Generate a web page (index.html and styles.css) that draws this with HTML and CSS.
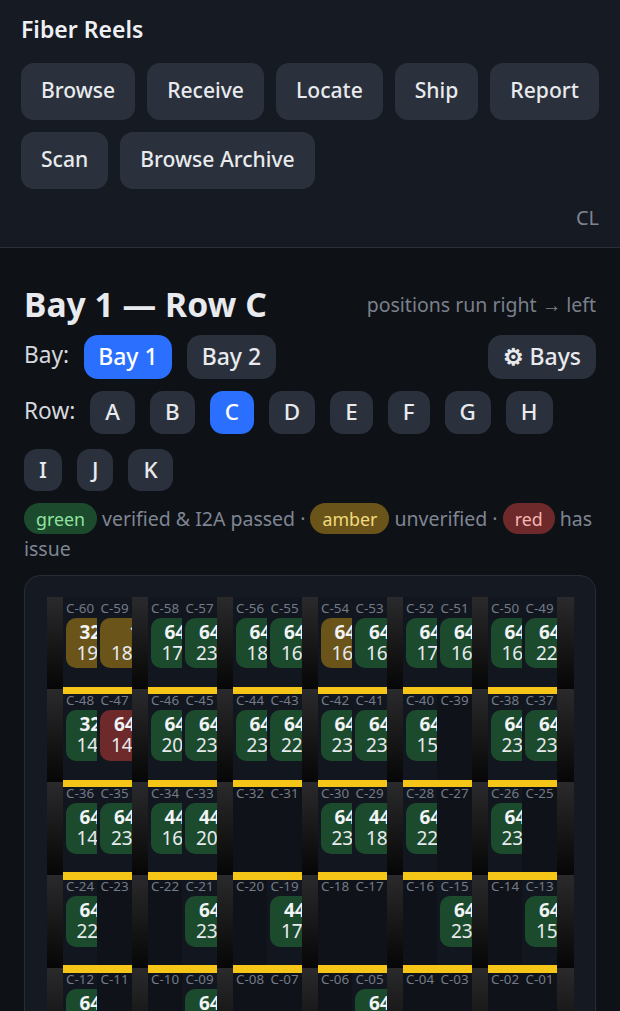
FILE: index.html
```html
<!DOCTYPE html>
<html lang="en">
<head>
<meta charset="utf-8">
<title>Fiber Reels</title>
<link rel="stylesheet" href="styles.css">
</head>
<body>
<header class="top">
  <div class="brand">Fiber Reels</div>
  <nav class="nav">
    <a class="nav-btn">Browse</a><a class="nav-btn">Receive</a><a class="nav-btn">Locate</a><a class="nav-btn">Ship</a><a class="nav-btn">Report</a><a class="nav-btn">Scan</a><a class="nav-btn">Browse Archive</a>
  </nav>
  <div class="user">CL</div>
</header>
<main class="main">
  <div class="title-row"><h1>Bay 1 — Row C</h1><span class="hint">positions run right → left</span></div>
  <div class="bay-row"><span class="lbl">Bay:</span><a class="pill on">Bay 1</a><a class="pill">Bay 2</a><a class="pill gear"><span class="cog">⚙</span> Bays</a></div>
  <div class="row-row"><span class="lbl">Row:</span><a class="key">A</a><a class="key">B</a><a class="key on">C</a><a class="key">D</a><a class="key">E</a><a class="key">F</a><a class="key">G</a><a class="key">H</a><a class="key">I</a><a class="key">J</a><a class="key">K</a></div>
  <p class="legend"><span class="tag g">green</span> verified &amp; I2A passed · <span class="tag a">amber</span> unverified · <span class="tag r">red</span> has issue</p>
  <section class="rack">
    <div class="cell"><div class="bay"><div class="slot"><div class="pos">C-60</div><div class="card a"><b>32</b><span>19</span></div></div><div class="slot"><div class="pos">C-59</div><div class="card a"><b class="far">1</b><span>18</span></div></div><div class="beam"></div></div></div>
    <div class="cell"><div class="bay"><div class="slot"><div class="pos">C-58</div><div class="card g"><b>64</b><span>17</span></div></div><div class="slot"><div class="pos">C-57</div><div class="card g"><b>64</b><span>23</span></div></div><div class="beam"></div></div></div>
    <div class="cell"><div class="bay"><div class="slot"><div class="pos">C-56</div><div class="card g"><b>64</b><span>18</span></div></div><div class="slot"><div class="pos">C-55</div><div class="card g"><b>64</b><span>16</span></div></div><div class="beam"></div></div></div>
    <div class="cell"><div class="bay"><div class="slot"><div class="pos">C-54</div><div class="card a"><b>64</b><span>16</span></div></div><div class="slot"><div class="pos">C-53</div><div class="card g"><b>64</b><span>16</span></div></div><div class="beam"></div></div></div>
    <div class="cell"><div class="bay"><div class="slot"><div class="pos">C-52</div><div class="card g"><b>64</b><span>17</span></div></div><div class="slot"><div class="pos">C-51</div><div class="card g"><b>64</b><span>16</span></div></div><div class="beam"></div></div></div>
    <div class="cell"><div class="bay"><div class="slot"><div class="pos">C-50</div><div class="card g"><b>64</b><span>16</span></div></div><div class="slot"><div class="pos">C-49</div><div class="card g"><b>64</b><span>22</span></div></div><div class="beam"></div></div></div>
    <div class="endpost"></div>

    <div class="cell"><div class="bay"><div class="slot"><div class="pos">C-48</div><div class="card g"><b>32</b><span>14</span></div></div><div class="slot"><div class="pos">C-47</div><div class="card r"><b>64</b><span>14</span></div></div><div class="beam"></div></div></div>
    <div class="cell"><div class="bay"><div class="slot"><div class="pos">C-46</div><div class="card g"><b>64</b><span>20</span></div></div><div class="slot"><div class="pos">C-45</div><div class="card g"><b>64</b><span>23</span></div></div><div class="beam"></div></div></div>
    <div class="cell"><div class="bay"><div class="slot"><div class="pos">C-44</div><div class="card g"><b>64</b><span>23</span></div></div><div class="slot"><div class="pos">C-43</div><div class="card g"><b>64</b><span>22</span></div></div><div class="beam"></div></div></div>
    <div class="cell"><div class="bay"><div class="slot"><div class="pos">C-42</div><div class="card g"><b>64</b><span>23</span></div></div><div class="slot"><div class="pos">C-41</div><div class="card g"><b>64</b><span>23</span></div></div><div class="beam"></div></div></div>
    <div class="cell"><div class="bay"><div class="slot"><div class="pos">C-40</div><div class="card g"><b>64</b><span>15</span></div></div><div class="slot empty"><div class="pos">C-39</div></div><div class="beam"></div></div></div>
    <div class="cell"><div class="bay"><div class="slot"><div class="pos">C-38</div><div class="card g"><b>64</b><span>23</span></div></div><div class="slot"><div class="pos">C-37</div><div class="card g"><b>64</b><span>23</span></div></div><div class="beam"></div></div></div>
    <div class="endpost"></div>

    <div class="cell"><div class="bay"><div class="slot"><div class="pos">C-36</div><div class="card g"><b>64</b><span>14</span></div></div><div class="slot"><div class="pos">C-35</div><div class="card g"><b>64</b><span>23</span></div></div><div class="beam"></div></div></div>
    <div class="cell"><div class="bay"><div class="slot"><div class="pos">C-34</div><div class="card g"><b>44</b><span>16</span></div></div><div class="slot"><div class="pos">C-33</div><div class="card g"><b>44</b><span>20</span></div></div><div class="beam"></div></div></div>
    <div class="cell"><div class="bay"><div class="slot empty"><div class="pos">C-32</div></div><div class="slot empty"><div class="pos">C-31</div></div><div class="beam"></div></div></div>
    <div class="cell"><div class="bay"><div class="slot"><div class="pos">C-30</div><div class="card g"><b>64</b><span>23</span></div></div><div class="slot"><div class="pos">C-29</div><div class="card g"><b>44</b><span>18</span></div></div><div class="beam"></div></div></div>
    <div class="cell"><div class="bay"><div class="slot"><div class="pos">C-28</div><div class="card g"><b>64</b><span>22</span></div></div><div class="slot empty"><div class="pos">C-27</div></div><div class="beam"></div></div></div>
    <div class="cell"><div class="bay"><div class="slot"><div class="pos">C-26</div><div class="card g"><b>64</b><span>23</span></div></div><div class="slot empty"><div class="pos">C-25</div></div><div class="beam"></div></div></div>
    <div class="endpost"></div>

    <div class="cell"><div class="bay"><div class="slot"><div class="pos">C-24</div><div class="card g"><b>64</b><span>22</span></div></div><div class="slot empty"><div class="pos">C-23</div></div><div class="beam"></div></div></div>
    <div class="cell"><div class="bay"><div class="slot empty"><div class="pos">C-22</div></div><div class="slot"><div class="pos">C-21</div><div class="card g"><b>64</b><span>23</span></div></div><div class="beam"></div></div></div>
    <div class="cell"><div class="bay"><div class="slot empty"><div class="pos">C-20</div></div><div class="slot"><div class="pos">C-19</div><div class="card g"><b>44</b><span>17</span></div></div><div class="beam"></div></div></div>
    <div class="cell"><div class="bay"><div class="slot empty"><div class="pos">C-18</div></div><div class="slot empty"><div class="pos">C-17</div></div><div class="beam"></div></div></div>
    <div class="cell"><div class="bay"><div class="slot empty"><div class="pos">C-16</div></div><div class="slot"><div class="pos">C-15</div><div class="card g"><b>64</b><span>23</span></div></div><div class="beam"></div></div></div>
    <div class="cell"><div class="bay"><div class="slot empty"><div class="pos">C-14</div></div><div class="slot"><div class="pos">C-13</div><div class="card g"><b>64</b><span>15</span></div></div><div class="beam"></div></div></div>
    <div class="endpost"></div>

    <div class="cell"><div class="bay"><div class="slot"><div class="pos">C-12</div><div class="card g"><b>64</b><span>22</span></div></div><div class="slot empty"><div class="pos">C-11</div></div><div class="beam"></div></div></div>
    <div class="cell"><div class="bay"><div class="slot empty"><div class="pos">C-10</div></div><div class="slot"><div class="pos">C-09</div><div class="card g"><b>64</b><span>23</span></div></div><div class="beam"></div></div></div>
    <div class="cell"><div class="bay"><div class="slot empty"><div class="pos">C-08</div></div><div class="slot empty"><div class="pos">C-07</div></div><div class="beam"></div></div></div>
    <div class="cell"><div class="bay"><div class="slot empty"><div class="pos">C-06</div></div><div class="slot"><div class="pos">C-05</div><div class="card g"><b>64</b><span>23</span></div></div><div class="beam"></div></div></div>
    <div class="cell"><div class="bay"><div class="slot empty"><div class="pos">C-04</div></div><div class="slot empty"><div class="pos">C-03</div></div><div class="beam"></div></div></div>
    <div class="cell"><div class="bay"><div class="slot empty"><div class="pos">C-02</div></div><div class="slot empty"><div class="pos">C-01</div></div><div class="beam"></div></div></div>
    <div class="endpost"></div>
  </section>
</main>
</body>
</html>
```
FILE: styles.css
```css
* { box-sizing: border-box; }
html, body { margin: 0; padding: 0; }
body { width: 620px; height: 1011px; overflow: hidden; background: #0e1116; color: #e8eaee; font-family: "Noto Sans", sans-serif; }
.top { height: 248px; background: #161a22; border-bottom: 1px solid #2b3038; padding: 14px 21px 0; }
.brand { font-size: 23px; font-weight: 600; line-height: 30px; color: #eef0f3; }
.nav { display: flex; flex-wrap: wrap; gap: 12.6px 12px; margin-top: 19px; }
.nav-btn { height: 56.6px; padding: 0 20px; background: #2b313c; border-radius: 13px; font-size: 21.1px; font-weight: 500; line-height: 54px; color: #e8eaee; }
.user { text-align: right; font-size: 20px; color: #7f8590; line-height: 26px; margin-top: 16px; }
.main { padding: 0 24px; }
.title-row { display: flex; justify-content: space-between; align-items: center; height: 50px; margin-top: 31px; }
h1 { margin: 0; font-size: 33.7px; font-weight: 700; color: #e8eaee; line-height: 50px; }
.hint { font-size: 19.5px; color: #7a808b; }
.bay-row { display: flex; gap: 15px; height: 44px; margin-top: 6px; }
.lbl { font-size: 22.7px; line-height: 40px; color: #d5d8de; }
.pill { height: 44px; line-height: 43px; padding: 0 15px; border-radius: 14px; background: #2b313c; font-size: 23px; font-weight: 500; color: #e8eaee; }
.pill.on { padding: 0 14px; }
.pill.on, .key.on { background: #2b6fff; color: #fff; }
.pill.gear { margin-left: auto; }
.cog { font-weight: 700; }
.row-row { display: flex; flex-wrap: wrap; gap: 15px; margin-top: 12px; }
.key { height: 42.6px; padding: 0 15px; border-radius: 13px; background: #2b313c; font-size: 22.4px; font-weight: 500; line-height: 42px; color: #e8eaee; text-align: center; }
.legend { margin: 12.5px 0 0; font-size: 19.5px; line-height: 30px; color: #7f8693; }
.tag { padding: 3.6px 12px; border-radius: 16px; font-size: 17.8px; }
.tag.g { background: #1c4a2d; color: #8fe3a0; }
.tag.a { background: #6b541a; color: #f2dc7e; }
.tag.r { background: #6e2a2a; color: #f5b7b1; }
.rack { margin-top: 11px; height: 460px; border: 1px solid #262c36; border-radius: 16px; background: #141922; padding: 21px 0 0 21.7px; display: grid; grid-template-columns: repeat(6, 85px) 17px; grid-auto-rows: 92.8px; }
.cell { display: flex; position: relative; }
.cell::before { content: ""; flex: 0 0 16px; background: linear-gradient(#2a2a2c, #060606); }
.bay { flex: 0 0 69px; display: flex; background: #12161f; position: relative; }
.endpost { background: linear-gradient(#2a2a2c, #060606); }
.beam { position: absolute; left: 0; right: 0; bottom: -4.7px; height: 7.4px; background: #f5c518; z-index: 1; }
.slot { flex: 0 0 34.5px; overflow: hidden; position: relative; }
.slot.empty { background: #0f1218; }
.pos { font-size: 13.4px; line-height: 17px; color: #737b88; padding: 3px 0 0 3.4px; white-space: nowrap; }
.card { margin: 1px 0 0 3.2px; width: 50px; height: 50.7px; border-radius: 10px; font-size: 19px; line-height: 21px; padding-top: 4px; color: #e8eaee; }
.card.g { background: #1c4a2d; }
.card.a { background: #6b541a; }
.card.r { background: #6e2a2a; }
.card b { display: block; font-weight: 700; padding-left: 13.5px; color: #f2f3f5; white-space: nowrap; }
.card b.far { padding-left: 29px; }
.card span { display: block; padding-left: 10.5px; white-space: nowrap; }
```
